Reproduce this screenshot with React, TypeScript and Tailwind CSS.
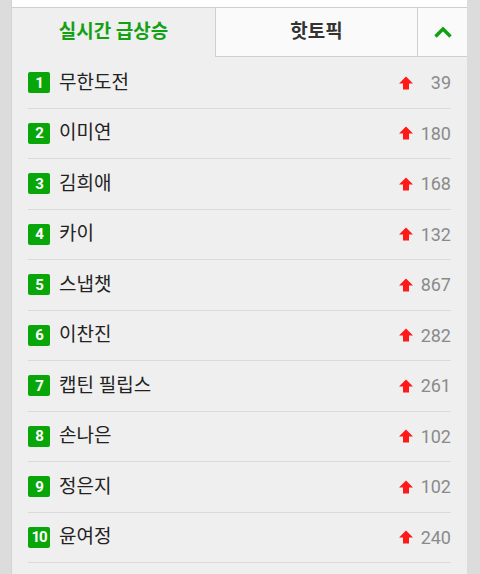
import React from "react";

const items = [
  { name: "무한도전", count: 39 },
  { name: "이미연", count: 180 },
  { name: "김희애", count: 168 },
  { name: "카이", count: 132 },
  { name: "스냅챗", count: 867 },
  { name: "이찬진", count: 282 },
  { name: "캡틴 필립스", count: 261 },
  { name: "손나은", count: 102 },
  { name: "정은지", count: 102 },
  { name: "윤여정", count: 240 },
];

function UpArrow() {
  return (
    <svg width="14" height="14" viewBox="0 0 14 14" className="shrink-0">
      <path d="M7 0.5 L14 7.5 L10 7.5 L10 13.5 L4 13.5 L4 7.5 L0 7.5 Z" fill="#ff1a1a" />
    </svg>
  );
}

export default function App() {
  return (
    <div
      className="min-h-screen w-[480px] h-[574px] overflow-hidden bg-[#dcdcdc] pl-[11px] pr-[13px]"
      style={{ fontFamily: "Roboto, 'Noto Sans CJK KR', sans-serif" }}
    >
      <div className="h-full bg-[#efefef] border-l border-[#d2d2d2]">
        {/* top white strip */}
        <div className="h-[7px] bg-white border-b border-[#cfcfcf] box-content" />

        {/* tabs */}
        <div className="flex h-[49px]">
          <div className="w-[203px] flex items-center justify-center text-[19px] font-bold text-[#13a113]">
            실시간 급상승
          </div>
          <div className="flex-1 flex items-center justify-center bg-[#fafafa] border-l border-b border-[#cfcfcf] text-[19px] font-bold text-[#333]">
            핫토픽
          </div>
          <div className="w-[50px] flex items-center justify-center bg-[#fafafa] border-l border-b border-[#cfcfcf]">
            <svg width="20" height="12" viewBox="0 0 20 12">
              <path d="M2.5 10.5 L10 3 L17.5 10.5" fill="none" stroke="#12a012" strokeWidth="3.4" />
            </svg>
          </div>
        </div>

        {/* list */}
        <div className="px-4 pt-[1px]">
          {items.map((it, i) => (
            <div key={i} className="flex items-center h-[50.5px] border-b border-[#dadada]">
              <div className="w-[22px] h-[21px] rounded-[2px] bg-[#09a609] flex items-center justify-center text-white font-bold text-[15px] tracking-[-1px]">
                {i + 1}
              </div>
              <div className="ml-[9px] text-[19px] text-[#222]">{it.name}</div>
              <div className="ml-auto flex items-center">
                <UpArrow />
                <div className="w-[38px] text-right text-[18px] text-[#8a8a8a]">{it.count}</div>
              </div>
            </div>
          ))}
        </div>
      </div>
    </div>
  );
}
